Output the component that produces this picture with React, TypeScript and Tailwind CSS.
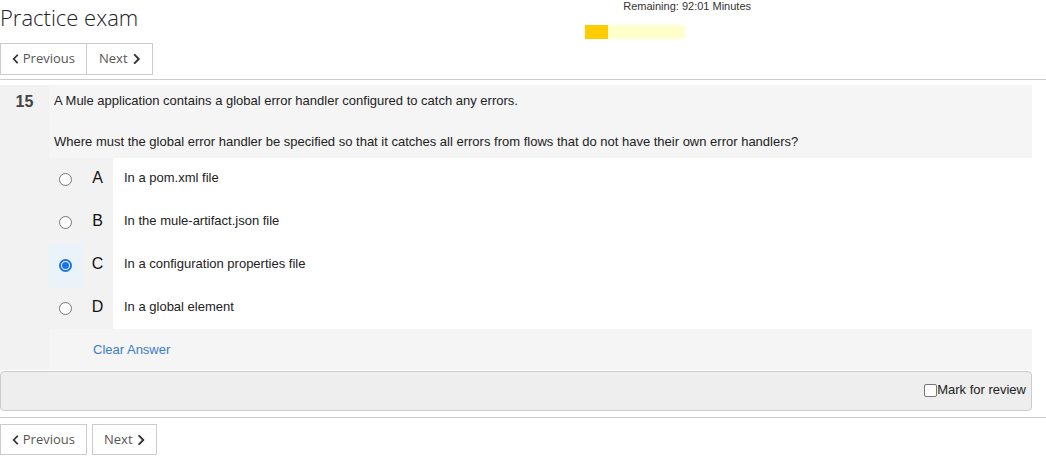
import { FaChevronLeft, FaChevronRight } from "react-icons/fa";

const OPTIONS = [
  { letter: "A", text: "In a pom.xml file" },
  { letter: "B", text: "In the mule-artifact.json file" },
  { letter: "C", text: "In a configuration properties file" },
  { letter: "D", text: "In a global element" },
];

const SELECTED = "C";

function NavButton({ label, dir }: { label: string; dir: "prev" | "next" }) {
  return (
    <span className="flex items-center gap-[4px] h-full px-[11px]">
      {dir === "prev" && <FaChevronLeft size={12} className="text-[#333]" />}
      <span>{label}</span>
      {dir === "next" && <FaChevronRight size={12} className="text-[#333]" />}
    </span>
  );
}

function Radio({ checked }: { checked: boolean }) {
  return (
    <span
      className={`inline-flex items-center justify-center w-[13px] h-[13px] rounded-full bg-white ${
        checked ? "border-2 border-[#1a73e8]" : "border border-[#767676]"
      }`}
    >
      {checked && <span className="w-[7px] h-[7px] rounded-full bg-[#1a73e8]" />}
    </span>
  );
}

export default function App() {
  return (
    <div className="w-[1046px] h-[457px] bg-white text-[#222] font-['Liberation_Sans',Arial,sans-serif] overflow-hidden">
      {/* header */}
      <header className="flex h-[80px] border-b border-[#ccc]">
        <div className="w-[585px]">
          <h1 className="font-['Open_Sans',sans-serif] font-light text-[22px] leading-[22px] pt-[6px] text-[#222]">
            Practice exam
          </h1>
          <div className="mt-[15px] inline-flex h-[32px] border border-[#ccc] font-['Open_Sans',sans-serif] text-[13px] text-[#555]">
            <div className="w-[86px] border-r border-[#ccc]">
              <NavButton label="Previous" dir="prev" />
            </div>
            <div className="w-[65px] pl-[1px]">
              <NavButton label="Next" dir="next" />
            </div>
          </div>
        </div>
        <div className="w-[166px]">
          <p className="text-right text-[11px] leading-[12px] text-[#333]">Remaining: 92:01 Minutes</p>
          <div className="mt-[13px] flex w-[100px] h-[14px] bg-[#ffffcc]">
            <div className="w-[23px] h-full bg-[#ffcc00]" />
          </div>
        </div>
      </header>

      {/* question */}
      <main className="mt-[5px] flex w-[1032px]">
        <div className="w-[49px] bg-[#f2f2f2] pt-[5px] text-center">
          <span className="text-[16px] font-bold text-[#444]">15</span>
        </div>
        <div className="flex-1">
          <div className="bg-[#f5f5f5] px-[5px] pt-[8px] pb-[9px] text-[13px] leading-[15px]">
            <p>A Mule application contains a global error handler configured to catch any errors.</p>
            <p className="mt-[26px]">
              Where must the global error handler be specified so that it catches all errors from flows that do not
              have their own error handlers?
            </p>
          </div>

          <div>
            {OPTIONS.map((o) => {
              const checked = o.letter === SELECTED;
              return (
                <div key={o.letter} className="flex h-[43px] last:h-[42px]">
                  <div
                    className={`w-[33px] flex items-center justify-center ${
                      checked ? "bg-[#eaf2fa]" : "bg-[#f2f2f2]"
                    }`}
                  >
                    <Radio checked={checked} />
                  </div>
                  <div className="w-[31px] bg-[#f2f2f2] flex items-center justify-center pb-[3px] text-[16px] text-[#111]">
                    {o.letter}
                  </div>
                  <div className="flex-1 bg-white flex items-center pl-[11px] pb-[3px] text-[13px]">{o.text}</div>
                </div>
              );
            })}
          </div>

          <div className="h-[41px] bg-[#f5f5f5] flex items-center pl-[44px] text-[13px] text-[#3b7cc4]">
            Clear Answer
          </div>
        </div>
      </main>

      {/* review bar */}
      <div className="mt-[1px] w-[1032px] h-[40px] rounded-[4px] border border-[#ccc] bg-[#eeeeee] flex items-center justify-end pr-[5px] pb-[2px]">
        <label className="flex items-center text-[13px] text-[#222]">
          <span className="w-[13px] h-[13px] rounded-[2px] border border-[#767676] bg-white" />
          Mark for review
        </label>
      </div>

      <div className="mt-[6px] border-t border-[#ccc]" />

      {/* footer nav */}
      <div className="mt-[6px] flex gap-[5px] font-['Open_Sans',sans-serif] text-[13px] text-[#555]">
        <div className="w-[87px] h-[31px] border border-[#ccc]">
          <NavButton label="Previous" dir="prev" />
        </div>
        <div className="w-[65px] h-[31px] border border-[#ccc]">
          <NavButton label="Next" dir="next" />
        </div>
      </div>
    </div>
  );
}
